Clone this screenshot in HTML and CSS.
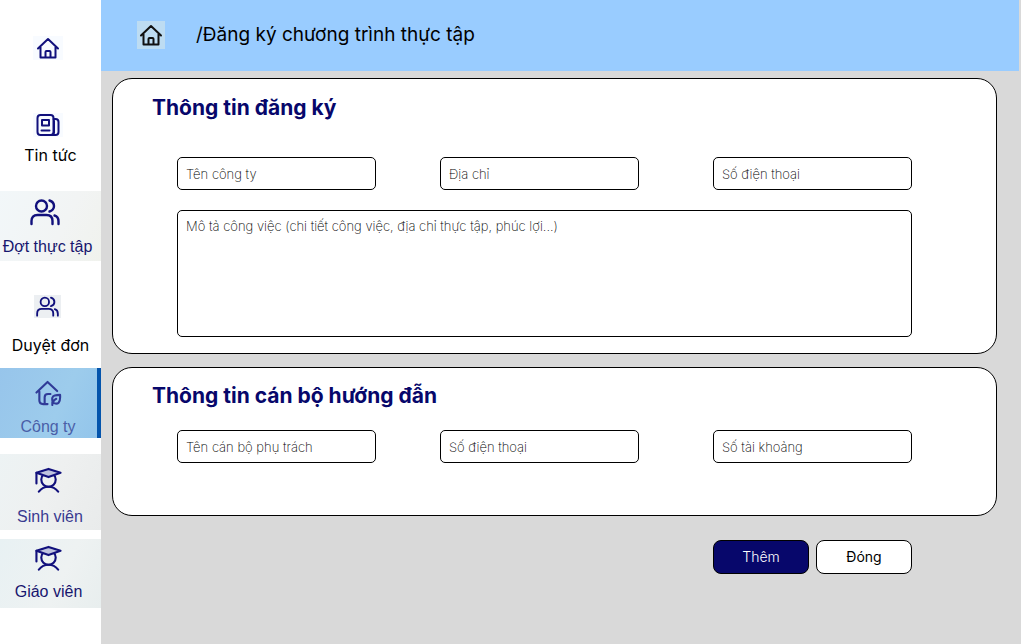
FILE: index.html
```html
<!DOCTYPE html>
<html lang="vi">
<head>
<meta charset="utf-8">
<meta name="viewport" content="width=device-width, initial-scale=1">
<title>Đăng ký chương trình thực tập</title>
<link rel="stylesheet" href="styles.css">
</head>
<body>
<svg class="sprite" aria-hidden="true">
  <symbol id="home" viewBox="0 0 24 24">
    <path d="M2 12.500 12 3l10 9.500M4.500 11v10.500h15V11M9.500 21.500v-5.500q0-1 1-1h3q1 0 1 1v5.500"/>
  </symbol>
  <symbol id="news" viewBox="0 0 24 24">
    <rect x="1.500" y="2" width="16" height="20" rx="3"/>
    <path d="M17.500 6h2q3 0 3 3v10q0 3-3 3H15M18 8v12M5.500 17.500h8"/>
    <rect x="6" y="7" width="7" height="5.500"/>
  </symbol>
  <symbol id="people" viewBox="0 0 30 26">
    <circle cx="11.500" cy="7" r="5.500"/>
    <path d="M1.500 25v-3q0-6 6-6h9q6 0 6 6v3M19.500 1.500q4.500 1.500 4.500 5.500t-4.500 5.500M24.500 16.500q4 1 4 6V25"/>
  </symbol>
  <symbol id="eco" viewBox="0 0 28 27">
    <path d="M1.500 13 13 2l10 9.500M4.500 12v9q0 4 4 4H13M10 25v-7q0-3.500 3.500-3.500H16"/>
    <path d="M18 26v-3M18.500 23.500q-2-6.500 2-7.500 2-.5 5.500-.5.500 6-1.500 8t-6 0Zm0 0q1-3 3.500-4"/>
  </symbol>
  <symbol id="grad" viewBox="0 0 28 26">
    <circle cx="14" cy="12.500" r="7.500"/>
    <path class="cap" d="m1.500 5.500 12.500-4 12.500 4-12.500 4.500Z"/>
    <path d="M1.500 5.500v11M4 25q4-5 10-5t10 5"/>
  </symbol>
</svg>
<div class="app">
  <nav class="sidebar" aria-label="Menu chính">
    <a class="item item-home" href="#" aria-label="Trang chủ"><span class="tile"><svg class="icon"><use href="#home"/></svg></span></a>
    <a class="item item-plain" href="#"><span class="tile"><svg class="icon"><use href="#news"/></svg></span><span class="label">Tin tức</span></a>
    <a class="item item-photo item-intern" href="#"><svg class="icon icon-large"><use href="#people"/></svg><span class="label">Đợt thực tập</span></a>
    <a class="item item-plain item-review" href="#"><span class="tile tile-grey"><svg class="icon"><use href="#people"/></svg></span><span class="label">Duyệt đơn</span></a>
    <a class="item item-photo item-active" href="#" aria-current="page"><svg class="icon icon-medium"><use href="#eco"/></svg><span class="label">Công ty</span></a>
    <a class="item item-photo item-student" href="#"><svg class="icon icon-medium"><use href="#grad"/></svg><span class="label">Sinh viên</span></a>
    <a class="item item-photo item-teacher" href="#"><svg class="icon icon-medium"><use href="#grad"/></svg><span class="label">Giáo viên</span></a>
  </nav>
  <div class="page">
    <header class="topbar">
      <a class="home-link" href="#" aria-label="Trang chủ"><svg class="icon"><use href="#home"/></svg></a>
      <h1 class="crumb">/Đăng ký chương trình thực tập</h1>
    </header>
    <form class="form">
      <section class="card">
        <h2 class="title">Thông tin đăng ký</h2>
        <div class="fields">
          <input class="field" type="text" placeholder="Tên công ty" aria-label="Tên công ty">
          <input class="field" type="text" placeholder="Địa chỉ" aria-label="Địa chỉ">
          <input class="field" type="tel" placeholder="Số điện thoại" aria-label="Số điện thoại">
          <textarea class="field description" placeholder="Mô tả công việc (chi tiết công việc, địa chỉ thực tập, phúc lợi...)" aria-label="Mô tả công việc"></textarea>
        </div>
      </section>
      <section class="card card-mentor">
        <h2 class="title">Thông tin cán bộ hướng đẫn</h2>
        <div class="fields">
          <input class="field" type="text" placeholder="Tên cán bộ phụ trách" aria-label="Tên cán bộ phụ trách">
          <input class="field" type="tel" placeholder="Số điện thoại" aria-label="Số điện thoại cán bộ">
          <input class="field" type="text" placeholder="Số tài khoảng" aria-label="Số tài khoảng">
        </div>
      </section>
      <div class="actions">
        <button class="button button-primary" type="submit">Thêm</button>
        <button class="button" type="button">Đóng</button>
      </div>
    </form>
  </div>
</div>
</body>
</html>
```
FILE: styles.css
```css
*, *::before, *::after { box-sizing: border-box; }
body { margin: 0; font-family: Inter, "Liberation Sans", sans-serif; color: #000; background: #d9d9d9; }
.sprite { position: absolute; width: 0; height: 0; }
.app { display: flex; min-height: 100vh; }

.sidebar { display: flex; flex-direction: column; flex: 0 0 101px; background: #fff; padding-top: 36px; }
.item { display: flex; flex-direction: column; align-items: center; padding-right: 5px; color: #000; text-decoration: none; font-size: 16px; line-height: 20px; white-space: nowrap; }
.icon { display: block; width: 24px; height: 24px; fill: none; stroke: #11107c; stroke-width: 2; stroke-linejoin: round; stroke-linecap: round; }
.icon-large { width: 30px; height: 28px; stroke-width: 2.4; }
.icon-medium { width: 27px; height: 26px; stroke-width: 2.2; }
.cap { fill: #bfc3df; }
.tile { display: flex; justify-content: center; width: 30px; background: #f8fbff; }
.tile-grey { background: #eceff2; width: 27px; }
.item-home { margin-bottom: 53px; }
.item-plain { padding-right: 0; }
.item-plain .tile { margin-right: 5px; }
.item-plain .label { margin-top: 8px; }
.item-photo { height: 70px; padding-top: 7px; justify-content: space-between; padding-bottom: 5px; background: linear-gradient(115deg, #f2f7f9, #f2f4f4 60%, #f0f2ed); color: #17166e; font-family: "Liberation Sans", Arial, sans-serif; }
.item-intern { padding-right: 6px; padding-bottom: 4px; }
.item-intern .icon { margin-right: 5px; }
.item-plain + .item-photo { margin-top: 26px; }
.item-review { margin-top: 34px; }
.item-review .tile { margin-right: 7px; }
.item-review .icon { width: 23px; height: 23px; stroke-width: 2.4; }
.item-review .label { margin-top: 17px; }
.sidebar .item-active { margin-top: 13px; padding-right: 1px; padding-top: 12px; padding-bottom: 1px; border-right: 4px solid #0454ac; background: linear-gradient(115deg, #97c5eb, #9dccec 60%, #93c5eb); color: #4a5fa8; }
.item-active .icon { stroke: #303b98; }
.item-student { margin-top: 16px; height: 76px; padding: 13px 1px 3px 0; background: linear-gradient(115deg, #edf3f4, #eef0f0 50%, #e9ebeb); color: #3a3a90; }
.item-student .icon { margin-right: 4px; }
.item-teacher { margin-top: 9px; height: 69px; padding-top: 6px; padding-right: 4px; padding-bottom: 6px; background: linear-gradient(115deg, #e8f1f3, #eef2f2 60%, #e8eeee); }

.page { flex: 1; min-width: 0; }
.topbar { display: flex; align-items: center; height: 71px; margin-right: 2px; padding: 0 0 1px 36px; gap: 31px; background: #99ccff; }
.home-link { display: grid; place-items: center; width: 28px; height: 28px; background: #bddcf2; }
.home-link .icon { stroke: #111; }
.crumb { margin: 0; font-size: 19px; line-height: 26px; font-weight: 400; }

.form { padding: 7px 24px 24px 11px; }
.card { padding: 15px 84px 16px 39px; background: #fff; border: 1px solid #000; border-radius: 20px; }
.card-mentor { margin-top: 13px; padding-top: 14px; padding-bottom: 52px; }
.title { margin: 0; font-size: 21px; line-height: 28px; font-weight: 700; color: #07076b; }
.fields { display: grid; grid-template-columns: 199fr 64fr 199fr 74fr 199fr; row-gap: 20px; margin: 35px 0 0 25px; }
.card-mentor .fields { margin-top: 20px; }
.field { display: block; width: 100%; min-width: 0; height: 33px; padding: 0 8px; border: 1px solid #000; border-radius: 5px; background: #fff; font: 200 13px/16px Inter, "Liberation Sans", sans-serif; color: #000; }
.field::placeholder { color: #000; opacity: 1; }
.field:nth-child(1) { grid-column: 1; }
.field:nth-child(2) { grid-column: 3; }
.field:nth-child(3) { grid-column: 5; }
.description { grid-column: 1 / -1; height: 127px; padding-top: 7px; resize: none; }

.actions { display: flex; justify-content: flex-end; gap: 7px; margin-top: 24px; padding-right: 85px; }
.button { width: 96px; height: 34px; padding: 0; border: 1px solid #000; border-radius: 8px; background: #fff; color: #000; font: 400 14px/20px Inter, "Liberation Sans", sans-serif; }
.button-primary { background: #07076b; color: #fff; font-weight: 300; }
```
